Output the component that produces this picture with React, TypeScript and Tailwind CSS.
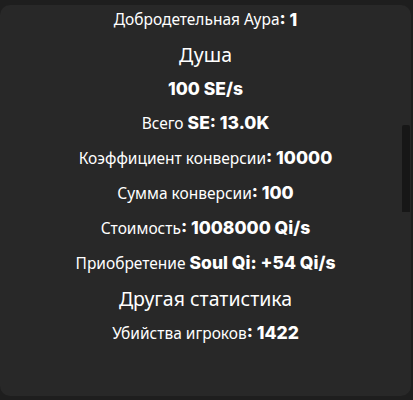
import React from "react";

const label = "font-['Noto_Sans',sans-serif] font-normal";
const value = "font-['Inter',sans-serif] font-extrabold";

type Row = { k: string; v?: string; heading?: boolean; bold?: boolean; h: string };

const rows: Row[] = [
  { k: "Добродетельная Аура", v: ": 1", h: "h-[36px]" },
  { k: "Душа", heading: true, h: "h-[34px]" },
  { k: "100 SE/s", bold: true, h: "h-[34px]" },
  { k: "Всего ", v: "SE: 13.0K", h: "h-[35px]" },
  { k: "Коэффициент конверсии", v: ": 10000", h: "h-[35px]" },
  { k: "Сумма конверсии", v: ": 100", h: "h-[35px]" },
  { k: "Стоимость", v: ": 1008000 Qi/s", h: "h-[35px]" },
  { k: "Приобретение ", v: "Soul Qi: +54 Qi/s", h: "h-[35px]" },
  { k: "Другая статистика", heading: true, h: "h-[35px]" },
  { k: "Убийства игроков", v: ": 1422", h: "h-[35px]" },
];

export default function App() {
  return (
    <div className="w-[413px] h-[400px] bg-[#1e1e1e] pt-[5px] overflow-hidden">
      <div className="relative w-[411px] h-[391px] bg-[#282828] rounded-[10px] overflow-hidden text-white">
        <div className="-mt-[3px] flex flex-col items-center">
          {rows.map((r, i) => (
            <div key={i} className={`${r.h} flex items-center justify-center whitespace-pre`}>
              {r.heading ? (
                <span className={`${label} text-[19.5px]`}>{r.k}</span>
              ) : r.bold ? (
                <span className={`${value} text-[17.5px]`}>{r.k}</span>
              ) : (
                <>
                  <span className={`${label} text-[15.5px]`}>{r.k}</span>
                  <span className={`${value} text-[17.5px]`}>{r.v}</span>
                </>
              )}
            </div>
          ))}
        </div>
        <div className="absolute right-[1px] top-[120px] w-[8px] h-[87px] bg-[#171717] rounded-t-[2px]" />
      </div>
    </div>
  );
}
